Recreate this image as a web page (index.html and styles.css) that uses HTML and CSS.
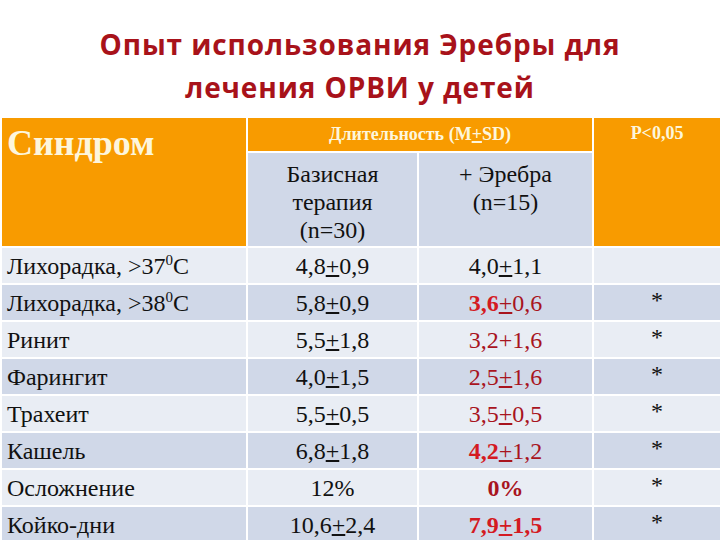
FILE: index.html
```html
<!DOCTYPE html>
<html lang="ru">
<head>
<meta charset="utf-8">
<link rel="stylesheet" href="styles.css">
</head>
<body>
<div class="slide">
  <h1 class="title">Опыт использования Эребры для<br>лечения ОРВИ у детей</h1>
  <table class="grid">
    <colgroup>
      <col class="c1"><col class="c2"><col class="c3"><col class="c4">
    </colgroup>
    <thead>
      <tr class="h1row">
        <th rowspan="2" class="hd syn">Синдром</th>
        <th colspan="2" class="hd dur">Длительность (M<u>+</u>SD)</th>
        <th rowspan="2" class="hd pval">P&lt;0,05</th>
      </tr>
      <tr class="h2row">
        <th class="sub">Базисная<br>терапия<br>(n=30)</th>
        <th class="sub">+ Эребра<br>(n=15)</th>
      </tr>
    </thead>
    <tbody>
      <tr class="lt"><td class="name">Лихорадка, &gt;37<sup>0</sup>С</td><td>4,8<u>+</u>0,9</td><td>4,0<u>+</u>1,1</td><td class="star"></td></tr>
      <tr class="dk"><td class="name">Лихорадка, &gt;38<sup>0</sup>С</td><td>5,8<u>+</u>0,9</td><td class="red"><b class="br">3,6</b><u>+</u>0,6</td><td class="star">*</td></tr>
      <tr class="lt"><td class="name">Ринит</td><td>5,5<u>+</u>1,8</td><td class="red">3,2+1,6</td><td class="star">*</td></tr>
      <tr class="dk"><td class="name">Фарингит</td><td>4,0<u>+</u>1,5</td><td class="red">2,5<u>+</u>1,6</td><td class="star">*</td></tr>
      <tr class="lt"><td class="name">Трахеит</td><td>5,5<u>+</u>0,5</td><td class="red">3,5<u>+</u>0,5</td><td class="star">*</td></tr>
      <tr class="dk"><td class="name">Кашель</td><td>6,8<u>+</u>1,8</td><td class="red"><b class="br">4,2</b><u>+</u>1,2</td><td class="star">*</td></tr>
      <tr class="lt"><td class="name">Осложнение</td><td>12%</td><td class="red"><b>0%</b></td><td class="star">*</td></tr>
      <tr class="dk"><td class="name">Койко-дни</td><td>10,6<u>+</u>2,4</td><td class="red"><b class="br">7,9<u>+</u>1,5</b></td><td class="star">*</td></tr>
    </tbody>
  </table>
</div>
</body>
</html>
```
FILE: styles.css
```css
html, body {
  margin: 0;
  padding: 0;
  background: #ffffff;
  overflow: hidden;
}
.slide {
  width: 720px;
  height: 540px;
  overflow: hidden;
}
.title {
  margin: 0;
  padding: 23px 0 7px 0;
  text-align: center;
  font-family: "Open Sans", "Liberation Sans", sans-serif;
  font-weight: 700;
  font-size: 28px;
  line-height: 43px;
  color: #a8121a;
  letter-spacing: 0.9px;
}
.grid {
  border-collapse: collapse;
  table-layout: fixed;
  width: 760px;
  font-family: "Liberation Serif", "Times New Roman", serif;
  font-size: 24px;
  color: #111111;
}
.c1 { width: 246px; }
.c2 { width: 171px; }
.c3 { width: 175px; }
.c4 { width: 168px; }
.grid th, .grid td {
  border: 2px solid #ffffff;
  padding: 0;
}
.grid th.hd {
  background: #f89b00;
  color: #fdf6dc;
  vertical-align: top;
  font-weight: 700;
}
.h1row { height: 35px; }
.h2row { height: 95px; }
.grid th.syn {
  text-align: left;
  font-size: 36px;
  padding: 5px 0 0 5px;
  line-height: 40px;
}
.grid th.dur {
  font-size: 18px;
  padding-top: 5px;
  line-height: 22px;
  text-align: center;
}
.grid th.pval {
  font-size: 18px;
  padding: 4px 40px 0 0;
  line-height: 22px;
  text-align: center;
}
.grid th.sub {
  background: #d0d8e8;
  font-weight: 400;
  vertical-align: top;
  line-height: 28px;
  padding: 7px 0 0 0;
  text-align: center;
}
.grid tbody tr { height: 37px; }
.grid td {
  text-align: center;
  vertical-align: middle;
  line-height: 26px;
}
.grid td.name {
  text-align: left;
  padding-left: 5px;
}
.lt td { background: #e9edf4; }
.dk td { background: #d0d8e8; }
.grid td.star {
  padding: 2px 40px 0 0;
  vertical-align: top;
}
sup {
  font-size: 15px;
  line-height: 0;
  vertical-align: 9px;
}
.red { color: #a8141e; }
.red b { font-weight: 700; }
.red b.br { color: #d41a22; }
u {
  text-decoration: underline;
  text-decoration-thickness: 2px;
  text-underline-offset: 1px;
}
```
